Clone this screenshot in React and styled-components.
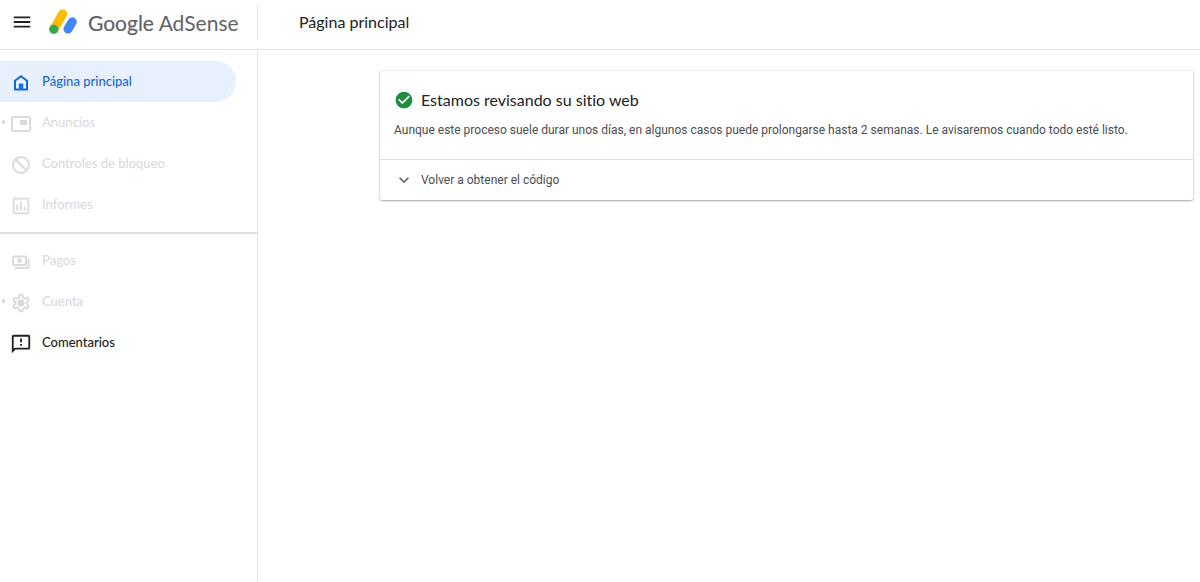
import React, {useState} from 'react';
import styled, {createGlobalStyle, css} from 'styled-components';
import {
    MdCheckCircle,
    MdExpandMore,
    MdMenu,
    MdOutlineAssessment,
    MdOutlineFeedback,
    MdOutlineSettings,
} from 'react-icons/md';

const GlobalStyle = createGlobalStyle`
    * {
        box-sizing: border-box;
    }

    body {
        margin: 0;
        background: #fff;
        color: #202124;
        font-family: Roboto, sans-serif;
    }
`;

const displayFont = css`
    font-family: "Lato", sans-serif;
    font-variant-ligatures: none;
`;

const Page = styled.div`
    display: flex;
    flex-direction: column;
    min-height: 100vh;
`;

const Header = styled.header`
    display: flex;
    height: 50px;
    border-bottom: 1px solid #e4e5e7;
`;

const Brand = styled.div`
    display: flex;
    align-items: center;
    width: 258px;
    height: 36px;
    margin-top: 4px;
    padding: 0 0 1px 11px;
    border-right: 1px solid #e4e5e7;
`;

const MenuButton = styled.button`
    display: flex;
    margin: 0 15px 0 0;
    padding: 0;
    border: 0;
    background: none;
    color: #202124;
    cursor: pointer;
`;

const BrandLink = styled.a`
    display: flex;
    align-items: center;
    gap: 10px;
    color: #5f6368;
    text-decoration: none;
`;

const BrandName = styled.span`
    ${displayFont}
    padding-top: 2px;
    font-size: 21px;
    line-height: 28px;
    white-space: nowrap;
`;

const BrandStrong = styled.span`
    -webkit-text-stroke: 0.2px currentColor;
`;

const PageTitle = styled.h1`
    ${displayFont}
    margin: 0;
    padding: 10px 0 0 41px;
    font-size: 16px;
    line-height: 24px;
    font-weight: 400;
`;

const Body = styled.div`
    display: flex;
    flex: 1;
`;

const Sidebar = styled.nav`
    flex: none;
    width: 258px;
    padding-top: 11px;
    border-right: 1px solid #e4e5e7;
`;

const NavList = styled.ul`
    margin: 0;
    padding: 0;
    list-style: none;

    & + & {
        margin-top: 7px;
        padding-top: 6px;
        border-top: 2px solid #dfe0e2;
    }
`;

const NavLink = styled.a`
    ${displayFont}
    display: flex;
    align-items: center;
    height: 41px;
    padding-bottom: 1px;
    margin-right: 21px;
    border-radius: 0 21px 21px 0;
    background: ${props => (props.$active ? '#e8f0fe' : 'transparent')};
    color: ${props => (props.$active ? '#1967d2' : props.$disabled ? '#d9dadd' : '#202124')};
    font-size: 13px;
    line-height: 20px;
    font-weight: 500;
    text-decoration: none;
`;

const Arrow = styled.span`
    width: 10px;
    padding-left: 2px;
    display: flex;
`;

const IconBox = styled.span`
    display: flex;
    width: 22px;
    margin-right: 10px;
    padding-top: 3px;
`;

const Main = styled.main`
    flex: 1;
    padding: 21px 7px 0 122px;
`;

const Card = styled.section`
    border-radius: 2px;
    background: #fff;
    box-shadow: 0 1px 2px rgba(60, 64, 67, 0.4), 0 0 2px rgba(60, 64, 67, 0.25);
`;

const CardBody = styled.div`
    padding: 17px 14px 19px;
`;

const CardTitle = styled.h2`
    ${displayFont}
    display: flex;
    align-items: center;
    gap: 7px;
    margin: 0;
    font-size: 16px;
    line-height: 24px;
    font-weight: 400;
`;

const CardText = styled.p`
    margin: 8px 0 0;
    color: #4a4d51;
    font-size: 12px;
    line-height: 20px;
`;

const ExpandButton = styled.button`
    display: flex;
    align-items: center;
    gap: 7px;
    width: 100%;
    height: 41px;
    padding: 0 14px;
    border: 0;
    border-top: 1px solid #dfe0e2;
    background: none;
    color: #4a4d51;
    font: 12px/20px Roboto, sans-serif;
    text-align: left;
    cursor: pointer;
`;

const IconSlot = styled.span`
    display: flex;
    justify-content: center;
    width: 20px;
    color: ${props => props.$color};
`;

function Logo() {
    return (
        <svg width="30" height="28" viewBox="0 0 30 28" fill="none" strokeWidth="9" strokeLinecap="round" aria-hidden="true">
            <path d="M14.6 5.9 6 20.9" stroke="#fbbc04"/>
            <path d="M24.3 13.8 20 21.1" stroke="#4285f4"/>
            <circle cx="5.8" cy="21.3" r="4.6" fill="#34a853"/>
        </svg>
    );
}

function HomeIcon() {
    return (
        <svg width="22" height="22" viewBox="0 0 22 22" fill="none" aria-hidden="true">
            <path d="M5 17.5V8.7L11 4.2l6 4.5v8.8H5Z" stroke="#1967d2" strokeWidth="2"/>
            <path d="M8.7 11.5h4.6v6H8.7z" fill="#1a73e8"/>
        </svg>
    );
}

function AdsIcon() {
    return (
        <svg width="22" height="22" viewBox="0 0 22 22" fill="none" aria-hidden="true">
            <rect x="2" y="4" width="18" height="14" rx="1" stroke="currentColor" strokeWidth="2"/>
            <path d="M10 7h7v5h-7z" fill="currentColor"/>
        </svg>
    );
}

function BlockIcon() {
    return (
        <svg width="22" height="22" viewBox="0 0 22 22" fill="none" stroke="currentColor" strokeWidth="2" aria-hidden="true">
            <circle cx="11" cy="11" r="8"/>
            <path d="m5.3 5.3 11.4 11.4"/>
        </svg>
    );
}

function PaymentsIcon() {
    return (
        <svg width="22" height="22" viewBox="0 0 22 22" fill="none" stroke="currentColor" strokeWidth="2" aria-hidden="true">
            <rect x="3" y="5.5" width="13" height="8.5" rx="1"/>
            <path d="M18.5 7.5V16a1 1 0 0 1-1 1H5"/>
            <circle cx="9.5" cy="9.7" r="2.4" fill="currentColor" stroke="none"/>
        </svg>
    );
}

function SettingsIcon() {
    return (
        <svg width="22" height="22" viewBox="0 0 22 22" aria-hidden="true">
            <MdOutlineSettings size={22}/>
            <circle cx="11" cy="11" r="3.2" fill="currentColor"/>
        </svg>
    );
}

const mainItems = [
    {label: 'Página principal', icon: <HomeIcon/>, active: true},
    {label: 'Anuncios', icon: <AdsIcon/>, disabled: true, arrow: true},
    {label: 'Controles de bloqueo', icon: <BlockIcon/>, disabled: true},
    {label: 'Informes', icon: <MdOutlineAssessment size={22}/>, disabled: true},
];

const accountItems = [
    {label: 'Pagos', icon: <PaymentsIcon/>, disabled: true},
    {label: 'Cuenta', icon: <SettingsIcon/>, disabled: true, arrow: true},
    {label: 'Comentarios', icon: <MdOutlineFeedback size={22}/>},
];

function NavItems({items}) {
    return (
        <NavList>
            {items.map(item => (
                <li key={item.label}>
                    <NavLink
                        href="#"
                        $active={item.active}
                        $disabled={item.disabled}
                        aria-current={item.active ? 'page' : undefined}
                        aria-disabled={item.disabled}
                    >
                        <Arrow>
                            {item.arrow && (
                                <svg width="4" height="6" viewBox="0 0 4 6" aria-hidden="true">
                                    <path d="M0.5 0.5v5L3.5 3z" fill="#c4c6c9"/>
                                </svg>
                            )}
                        </Arrow>
                        <IconBox>{item.icon}</IconBox>
                        {item.label}
                    </NavLink>
                </li>
            ))}
        </NavList>
    );
}

function App() {
    const [open, setOpen] = useState(false);

    return (
        <Page>
            <GlobalStyle/>
            <Header>
                <Brand>
                    <MenuButton type="button" aria-label="Menú">
                        <MdMenu size={22}/>
                    </MenuButton>
                    <BrandLink href="#">
                        <Logo/>
                        <BrandName><BrandStrong>Google</BrandStrong> AdSense</BrandName>
                    </BrandLink>
                </Brand>
                <PageTitle>Página principal</PageTitle>
            </Header>
            <Body>
                <Sidebar>
                    <NavItems items={mainItems}/>
                    <NavItems items={accountItems}/>
                </Sidebar>
                <Main>
                    <Card>
                        <CardBody>
                            <CardTitle>
                                <IconSlot $color="#1e8e3e"><MdCheckCircle size={20}/></IconSlot>
                                Estamos revisando su sitio web
                            </CardTitle>
                            <CardText>
                                Aunque este proceso suele durar unos días, en algunos casos puede prolongarse hasta 2
                                semanas. Le avisaremos cuando todo esté listo.
                            </CardText>
                        </CardBody>
                        <ExpandButton type="button" aria-expanded={open} onClick={() => setOpen(!open)}>
                            <IconSlot $color="#5f6368"><MdExpandMore size={20}/></IconSlot>
                            Volver a obtener el código
                        </ExpandButton>
                    </Card>
                </Main>
            </Body>
        </Page>
    );
}

export default App;
